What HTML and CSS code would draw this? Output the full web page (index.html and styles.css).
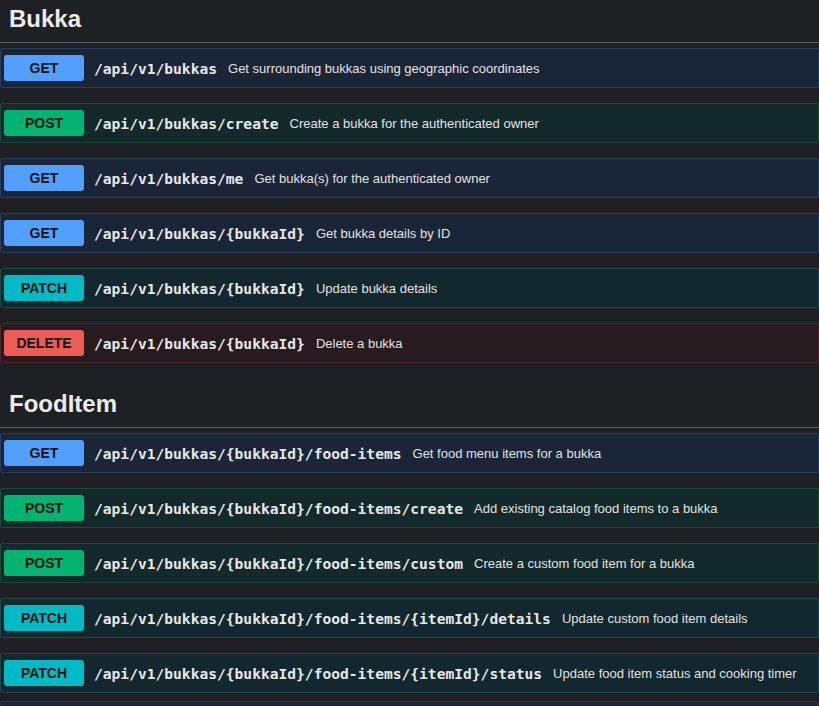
FILE: index.html
```html
<!DOCTYPE html>
<html lang="en">
<head>
  <meta charset="UTF-8">
  <title>Bukka API</title>
  <link rel="stylesheet" href="styles.css">
</head>
<body>
  <div class="page">

    <!-- Bukka endpoints -->
    <section class="tag-section">
      <h3 class="tag-title">Bukka</h3>
      <div class="op op-get">
        <span class="method">GET</span>
        <span class="path">/api/v1/bukkas</span>
        <span class="summary">Get surrounding bukkas using geographic coordinates</span>
      </div>
      <div class="op op-post">
        <span class="method">POST</span>
        <span class="path">/api/v1/bukkas/create</span>
        <span class="summary">Create a bukka for the authenticated owner</span>
      </div>
      <div class="op op-get">
        <span class="method">GET</span>
        <span class="path">/api/v1/bukkas/me</span>
        <span class="summary">Get bukka(s) for the authenticated owner</span>
      </div>
      <div class="op op-get">
        <span class="method">GET</span>
        <span class="path">/api/v1/bukkas/{bukkaId}</span>
        <span class="summary">Get bukka details by ID</span>
      </div>
      <div class="op op-patch">
        <span class="method">PATCH</span>
        <span class="path">/api/v1/bukkas/{bukkaId}</span>
        <span class="summary">Update bukka details</span>
      </div>
      <div class="op op-delete">
        <span class="method">DELETE</span>
        <span class="path">/api/v1/bukkas/{bukkaId}</span>
        <span class="summary">Delete a bukka</span>
      </div>
    </section>

    <!-- FoodItem endpoints -->
    <section class="tag-section">
      <h3 class="tag-title">FoodItem</h3>
      <div class="op op-get">
        <span class="method">GET</span>
        <span class="path">/api/v1/bukkas/{bukkaId}/food-items</span>
        <span class="summary">Get food menu items for a bukka</span>
      </div>
      <div class="op op-post">
        <span class="method">POST</span>
        <span class="path">/api/v1/bukkas/{bukkaId}/food-items/create</span>
        <span class="summary">Add existing catalog food items to a bukka</span>
      </div>
      <div class="op op-post">
        <span class="method">POST</span>
        <span class="path">/api/v1/bukkas/{bukkaId}/food-items/custom</span>
        <span class="summary">Create a custom food item for a bukka</span>
      </div>
      <div class="op op-patch">
        <span class="method">PATCH</span>
        <span class="path">/api/v1/bukkas/{bukkaId}/food-items/{itemId}/details</span>
        <span class="summary">Update custom food item details</span>
      </div>
      <div class="op op-patch">
        <span class="method">PATCH</span>
        <span class="path">/api/v1/bukkas/{bukkaId}/food-items/{itemId}/status</span>
        <span class="summary">Update food item status and cooking timer</span>
      </div>
      <!-- next block, only its top edge is in view -->
      <div class="op op-get op-next"></div>
    </section>

  </div>
</body>
</html>
```

FILE: styles.css
```css
body {
  margin: 0;
  background-color: #1e2023;
  color: #e4e4e4;
  font-family: "Liberation Sans", Arial, sans-serif;
}
.page {
  margin-top: -7px;
  overflow: hidden;
}
.tag-section {
  margin-bottom: 15px;
}
.tag-title {
  margin: 0 0 5px 0;
  padding: 11px 20px 8px 9px;
  font-size: 24px;
  line-height: 30px;
  font-weight: bold;
  color: #ececec;
  border-bottom: 1px solid #5c5e61;
}
.op {
  display: flex;
  align-items: center;
  height: 40px;
  box-sizing: border-box;
  padding: 0 3px;
  margin-bottom: 15px;
  border: 1px solid;
  border-radius: 2px;
  white-space: nowrap;
}
.method {
  flex: none;
  width: 80px;
  height: 26px;
  line-height: 26px;
  border-radius: 3px;
  text-align: center;
  font-size: 14px;
  font-weight: bold;
  color: #111;
}
.path {
  padding: 0 11px 0 10px;
  font-family: "DejaVu Sans Mono", "Liberation Mono", monospace;
  font-size: 14.6px;
  font-weight: bold;
  color: #e8e8e8;
}
.summary {
  font-size: 13px;
  color: #e2e2e2;
}

/* method colours */
.op-get {
  background-color: #1a2538;
  border-color: #2b3e5f;
}
.op-get .method {
  background-color: #53a0fc;
}
.op-post {
  background-color: #13292a;
  border-color: #1c4b3b;
}
.op-post .method {
  background-color: #04b372;
}
.op-patch {
  background-color: #13272e;
  border-color: #1d4a4f;
}
.op-patch .method {
  background-color: #03b9c4;
}
.op-delete {
  background-color: #271b20;
  border-color: #4b2628;
}
.op-delete .method {
  background-color: #ec5d55;
}
.op-next {
  margin-top: -7px;
  border-color: #123a60;
}
```
